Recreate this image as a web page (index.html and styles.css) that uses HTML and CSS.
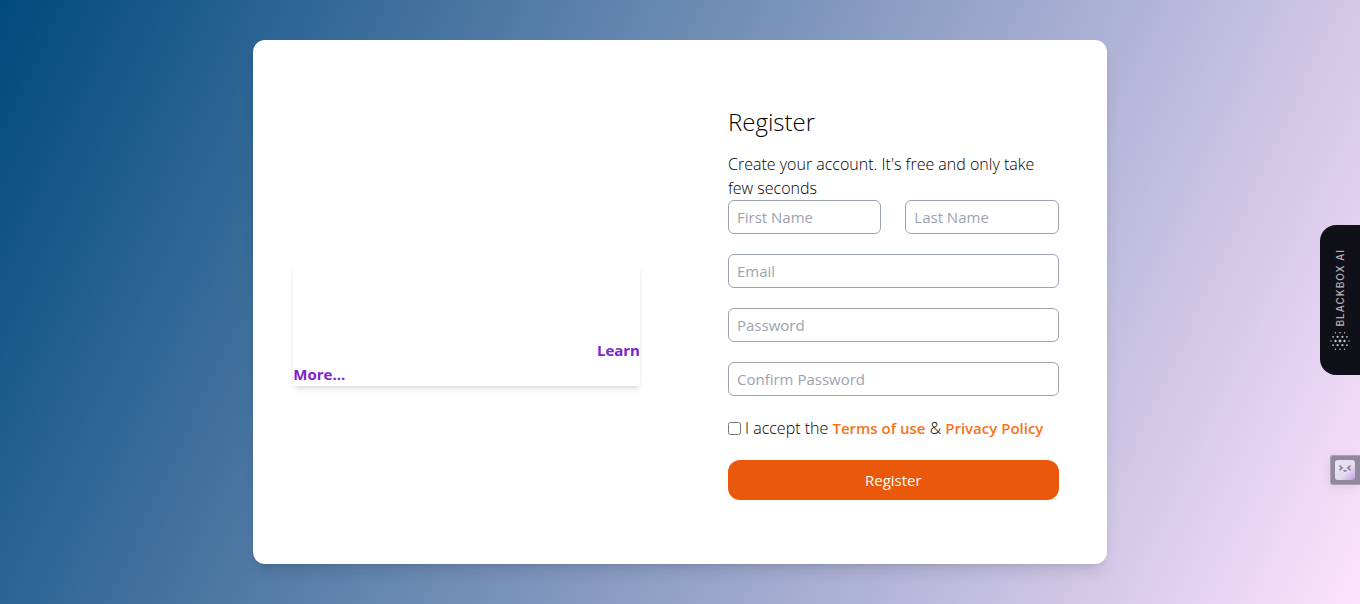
FILE: index.html
```
<!DOCTYPE html>
<html lang="en">
<head>
<meta charset="utf-8">
<meta name="viewport" content="width=device-width, initial-scale=1">
<title>Register</title>
<link rel="stylesheet" href="styles.css">
</head>
<body>
<main class="page">
  <div class="container">
    <div class="card">
      <section class="intro">
        <div class="intro-box">
          <a class="learn-more" href="#"><span class="learn-end">Learn</span> <span>More...</span></a>
        </div>
      </section>
      <section class="register">
        <h1 class="title">Register</h1>
        <p class="lead">Create your account. It's free and only take few seconds</p>
        <form class="form">
          <div class="names">
            <input class="field" type="text" placeholder="First Name" aria-label="First Name">
            <input class="field" type="text" placeholder="Last Name" aria-label="Last Name">
          </div>
          <input class="field" type="email" placeholder="Email" aria-label="Email">
          <input class="field" type="password" placeholder="Password" aria-label="Password">
          <input class="field" type="password" placeholder="Confirm Password" aria-label="Confirm Password">
          <div class="accept">
            <input class="tick" id="accept" type="checkbox">
            <label for="accept">I accept the <a class="policy" href="#">Terms of use</a> &amp; <a class="policy" href="#">Privacy Policy</a></label>
          </div>
          <button class="submit" type="submit">Register</button>
        </form>
      </section>
    </div>
  </div>
</main>

<button class="blackbox" type="button">
  <span class="blackbox-name">BLACKBOX AI</span>
  <svg class="blackbox-logo" viewBox="0 0 20 20" aria-hidden="true">
    <g fill="#c4c4c8">
      <circle cx="5.5" cy="1.7" r=".7"/><circle cx="10" cy="1.7" r=".8"/><circle cx="14.5" cy="1.7" r=".7"/>
      <circle cx="3" cy="5.8" r=".9"/><circle cx="7.6" cy="5.8" r="1.1"/><circle cx="12.4" cy="5.8" r="1.1"/><circle cx="17" cy="5.8" r=".9"/>
      <circle cx="1" cy="10" r=".7"/><circle cx="5.5" cy="10" r="1.2"/><circle cx="10" cy="10" r="1.4"/><circle cx="14.5" cy="10" r="1.2"/><circle cx="19" cy="10" r=".7"/>
      <circle cx="3" cy="14.2" r=".9"/><circle cx="7.6" cy="14.2" r="1.1"/><circle cx="12.4" cy="14.2" r="1.1"/><circle cx="17" cy="14.2" r=".9"/>
      <circle cx="5.5" cy="18.3" r=".7"/><circle cx="10" cy="18.3" r=".8"/><circle cx="14.5" cy="18.3" r=".7"/>
    </g>
  </svg>
</button>

<button class="helper" type="button" aria-label="Assistant">
  <svg class="helper-face" viewBox="0 0 20 20" aria-hidden="true">
    <defs>
      <linearGradient id="face" x1="0" y1="0" x2="1" y2="1">
        <stop offset="0" stop-color="#ebe5f4"/>
        <stop offset=".6" stop-color="#e5daf0"/>
        <stop offset="1" stop-color="#c49be0"/>
      </linearGradient>
    </defs>
    <rect width="20" height="20" rx="3" fill="url(#face)"/>
    <path d="M4.3 5.5l2.9 2.4-2.9 2.4M15.7 5.5l-2.9 2.4 2.9 2.4M8.5 10.3q1.5 1.3 3 0" fill="none" stroke="#80778c" stroke-width="1.4"/>
  </svg>
</button>
</body>
</html>
```
FILE: styles.css
```
* {
  box-sizing: border-box;
}

body {
  margin: 0;
  font-family: "Segoe UI", "Open Sans", "Noto Sans", sans-serif;
  font-size: 15px;
  line-height: 24px;
  color: #000;
}

a {
  text-decoration: none;
}

.page {
  min-height: 100vh;
  padding: 40px 0;
  background: linear-gradient(115deg, #004a7c, #fee2fe);
}

.container {
  max-width: 1280px;
  margin: 0 auto;
}

.card {
  display: grid;
  grid-template-columns: 1fr 1fr;
  width: 66.6667%;
  margin: 0 auto;
  background: #fff;
  border-radius: 12px;
  box-shadow: 0 10px 15px -3px rgba(0, 0, 0, .1), 0 4px 6px -4px rgba(0, 0, 0, .1);
}

.intro {
  display: flex;
  flex-direction: column;
  justify-content: center;
  padding: 88px 40px 40px;
}

.intro-box {
  padding-top: 72px;
  box-shadow: 0 4px 6px -1px rgba(0, 0, 0, .1), 0 2px 4px -2px rgba(0, 0, 0, .1);
}

.learn-more {
  display: flex;
  flex-direction: column;
  font-weight: 700;
  color: #7e22ce;
}

.learn-end {
  align-self: flex-end;
}

.register {
  padding: 64px 48px;
}

.title {
  margin: 0 0 12px;
  font-size: 24px;
  font-weight: 300;
  line-height: 36px;
}

.lead {
  margin: 0;
  font-size: 16px;
  font-weight: 300;
}

.form {
  display: grid;
  gap: 20px;
}

.names {
  display: grid;
  grid-template-columns: 1fr 1fr;
  gap: 24px;
}

.field {
  width: 100%;
  min-width: 0;
  height: 34px;
  padding: 4px 8px;
  border: 1px solid #9ca3af;
  border-radius: 6px;
  background: #fff;
  font: inherit;
}

.field::placeholder {
  color: #9ca3af;
  opacity: 1;
}

.accept {
  display: flex;
  align-items: center;
  gap: 4px;
  font-size: 16px;
  font-weight: 300;
}

.tick {
  width: 13px;
  height: 13px;
  margin: 0;
}

.policy {
  font-size: 15px;
  font-weight: 600;
  color: #f97316;
}

.submit {
  padding: 8px 0;
  border: 0;
  border-radius: 12px;
  background: #ea580c;
  color: #fff;
  font: inherit;
}

.blackbox {
  position: fixed;
  top: 225px;
  right: 0;
  display: flex;
  flex-direction: column;
  align-items: center;
  justify-content: center;
  gap: 4px;
  width: 40px;
  height: 150px;
  padding: 0;
  border: 0;
  border-radius: 16px 0 0 16px;
  background: #101118;
  color: #b4b4b8;
}

.blackbox-name {
  writing-mode: vertical-rl;
  transform: rotate(180deg);
  font: 500 10px/12px Inter, sans-serif;
  letter-spacing: 1px;
}

.blackbox-logo {
  width: 20px;
  height: 20px;
}

.helper {
  position: fixed;
  top: 455px;
  right: 0;
  display: flex;
  width: 30px;
  height: 30px;
  padding: 4px;
  border: 1px solid #aaa0b6;
  border-right: 0;
  border-radius: 3px 0 0 3px;
  background: #91879f;
  box-shadow: 0 2px 10px rgba(80, 50, 100, .1);
}

.helper-face {
  width: 20px;
  height: 20px;
}
```
